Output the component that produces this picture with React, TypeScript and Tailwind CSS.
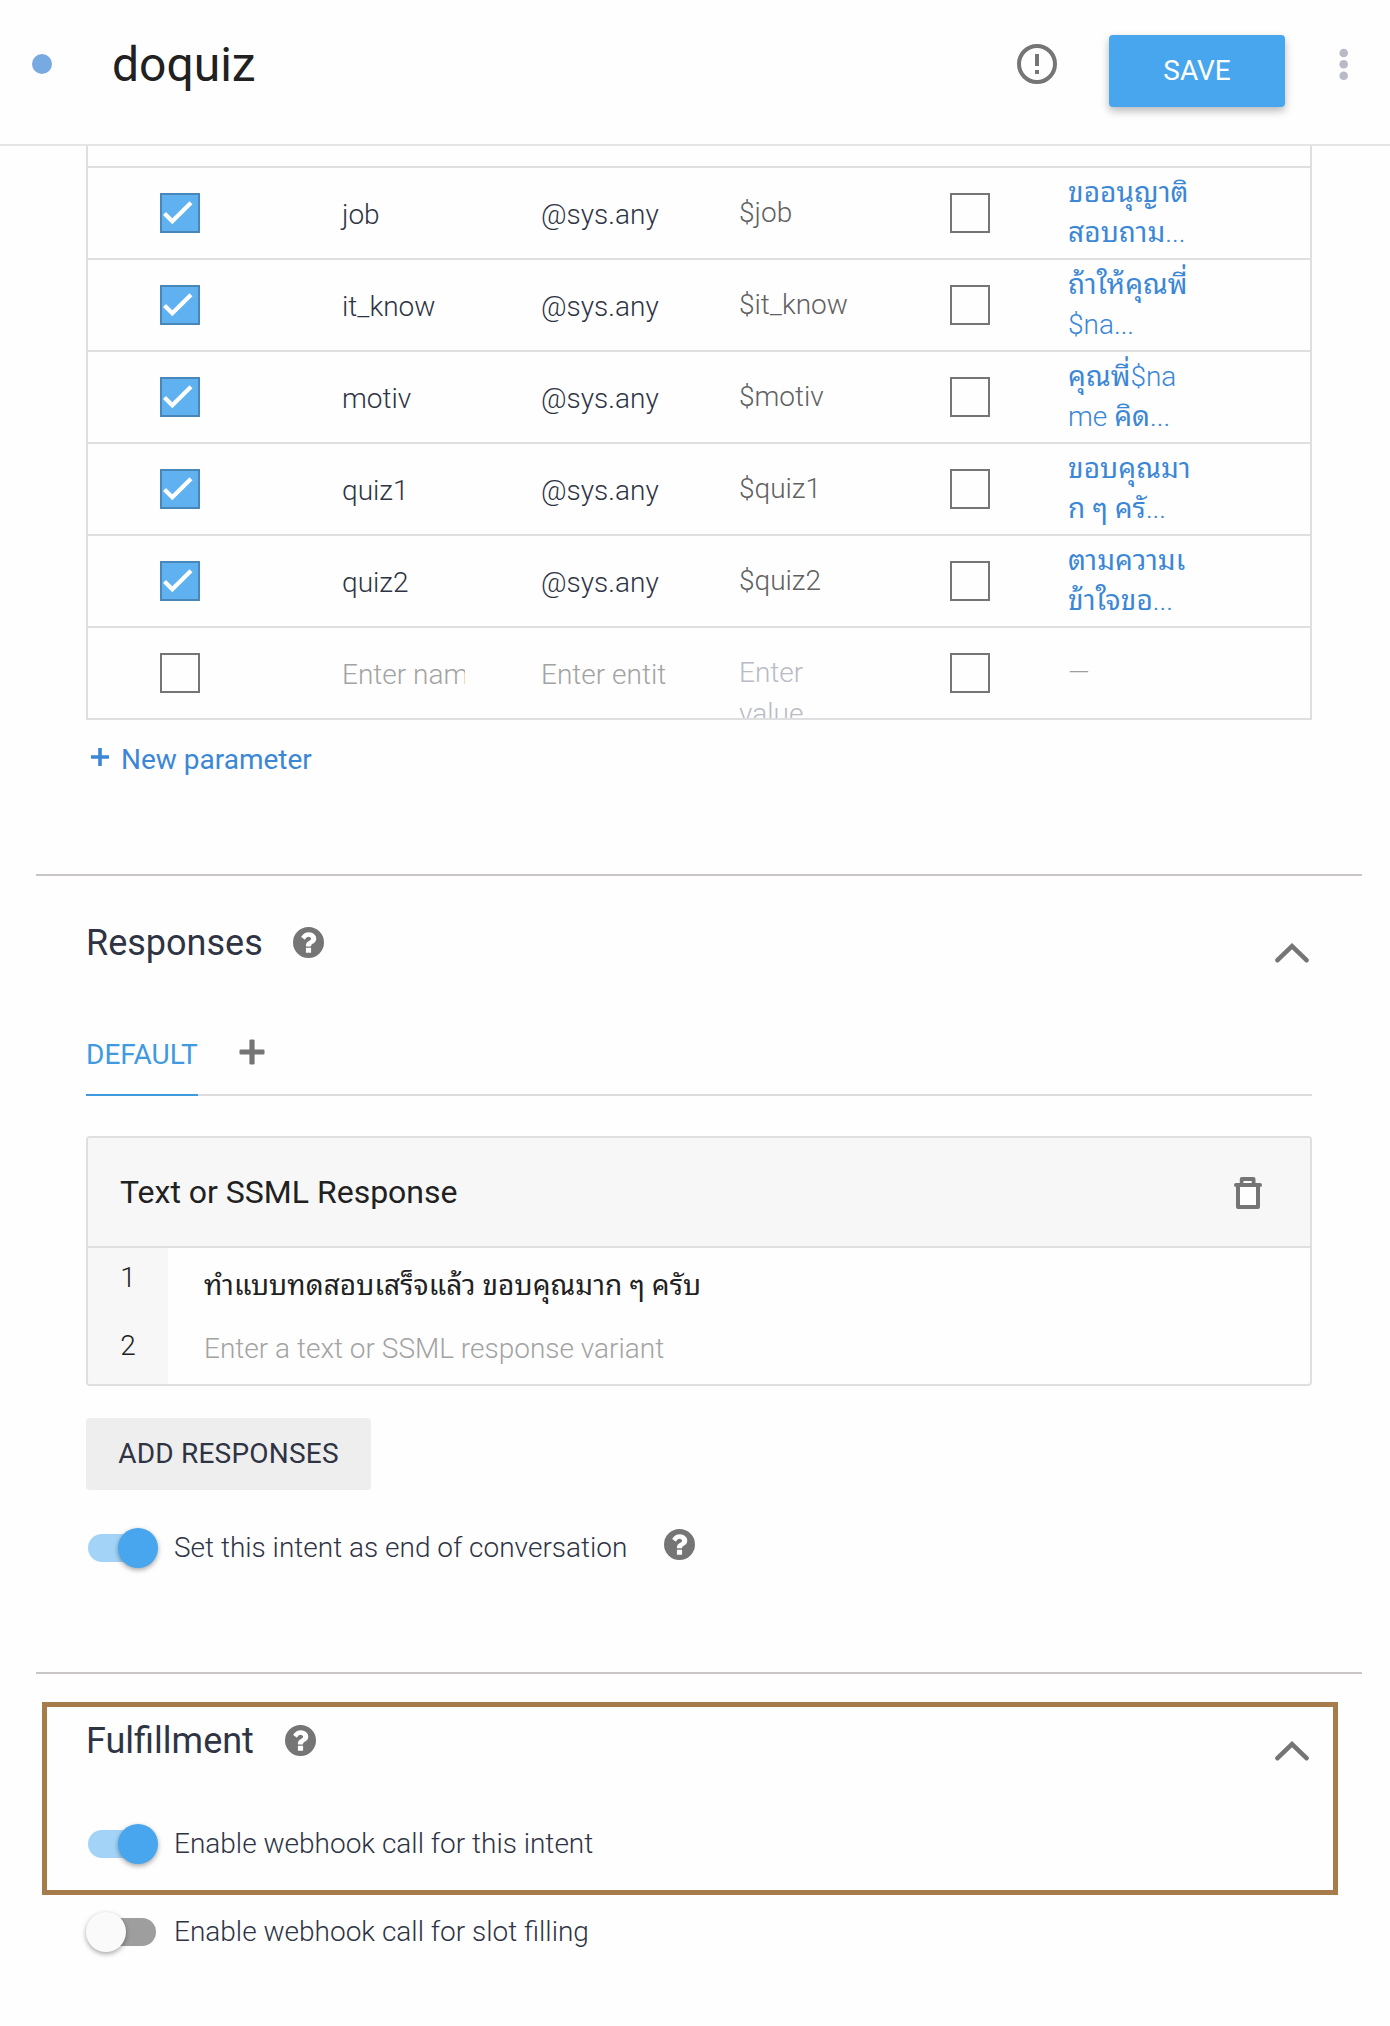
import React from "react";

type Param = { name: string; value: string; prompt: [string, string] };

const params: Param[] = [
  { name: "job", value: "$job", prompt: ["ขออนุญาติ", "สอบถาม..."] },
  { name: "it_know", value: "$it_know", prompt: ["ถ้าให้คุณพี่", "$na..."] },
  { name: "motiv", value: "$motiv", prompt: ["คุณพี่$na", "me คิด..."] },
  { name: "quiz1", value: "$quiz1", prompt: ["ขอบคุณมา", "ก ๆ ครั..."] },
  { name: "quiz2", value: "$quiz2", prompt: ["ตามความเ", "ข้าใจขอ..."] },
];

// Thai runs are set heavier than the light Latin text around them.
function Mixed({ text }: { text: string }) {
  return (
    <>
      {text.split(/([\u0e00-\u0e7f]+)/).map((part, i) =>
        i % 2 === 1 ? (
          <span key={i} className="font-['Noto_Sans_Thai_Looped','Loma','Waree','Garuda','Noto_Sans_Thai',sans-serif] leading-none font-normal tracking-[0.1px]">
            {part}
          </span>
        ) : (
          part
        ),
      )}
    </>
  );
}

function Checkbox({ checked = false }: { checked?: boolean }) {
  return checked ? (
    <span className="block size-10 border-2 border-[#4a87b9] bg-[#60b1ef]">
      <svg viewBox="0 0 36 36" className="block size-9">
        <path d="M2.500 18.500 L10.300 26.200 L29 7.700" fill="none" stroke="#fff" strokeWidth="4.200" />
      </svg>
    </span>
  ) : (
    <span className="block size-10 border-2 border-[#757575]" />
  );
}

function HelpIcon() {
  return (
    <svg viewBox="128 128 1536 1536" className="block size-[31px] shrink-0" fill="#757575">
      <path
        fillRule="evenodd"
        d="M1024 1376v-192q0-14-9-23t-23-9h-192q-14 0-23 9t-9 23v192q0 14 9 23t23 9h192q14 0 23-9t9-23zm256-672q0-88-55.500-163t-138.500-116-170-41q-243 0-371 213-15 24 8 42l132 100q7 6 19 6 16 0 25-12 53-68 86-92 34-24 86-24 48 0 85.500 26t37.500 59q0 38-20 61t-68 45q-63 28-115.500 86.500t-52.500 125.500v36q0 14 9 23t23 9h192q14 0 23-9t9-23q0-19 21.500-49.500t54.500-49.500q32-18 49-28.500t46-35 44.500-48 28-60.500 12.500-81zM1664 896a768 768 0 1 1-1536 0a768 768 0 1 1 1536 0z"
      />
    </svg>
  );
}

function Chevron() {
  return (
    <svg viewBox="0 0 34 20" className="block h-5 w-[34px]" fill="none" stroke="#757575" strokeWidth="4.6" strokeLinecap="round">
      <path d="M2.500 17.200 L17 3.200 L31.500 17.200" />
    </svg>
  );
}

function Toggle({ on = false }: { on?: boolean }) {
  return (
    <span className={on ? "flex h-10 w-[72px] items-center pl-0.5" : "flex h-10 w-[72px] items-center"}>
      {on ? (
        <>
          <span className="h-7 w-[50px] rounded-l-full bg-[#a3d4f7]" />
          <span className="-ml-5 size-10 shrink-0 rounded-full bg-[#48a6ee] shadow-[0_2px_5px_rgba(0,0,0,0.35)]" />
        </>
      ) : (
        <>
          <span className="z-10 size-10 shrink-0 rounded-full bg-[#fafafa] shadow-[0_2px_5px_rgba(0,0,0,0.35)]" />
          <span className="-ml-5 h-7 w-[50px] rounded-r-full bg-[#9e9e9e]" />
        </>
      )}
    </span>
  );
}

const cols = "grid h-[92px] grid-cols-[254px_199px_198px_211px_118px_1fr] overflow-hidden border-b-2 border-[#dfdfdf] font-light leading-10";

export default function App() {
  return (
    <div className="h-[2026px] w-[1390px] overflow-hidden bg-[#fefefe] font-['Roboto',sans-serif] text-[28px] text-[#2f3444]">
      <header className="flex h-[146px] border-b-2 border-[#e5e5e5]">
        <span className="mt-[54px] ml-8 size-5 rounded-full bg-[#78aae2]" />
        <h1 className="mt-[35px] ml-[60px] grow text-[48px] leading-[60px] text-[#212121]">doquiz</h1>
        <svg viewBox="0 0 40 40" className="mt-11 size-10" fill="none" stroke="#757575" strokeWidth="4">
          <circle cx="20" cy="20" r="18" />
          <path d="M20 10v12M20 26v4" />
        </svg>
        <button className="mt-[35px] ml-[52px] h-[72px] w-44 rounded bg-[#48a6ee] text-white shadow-[0_4px_8px_rgba(0,0,0,0.28)]">SAVE</button>
        <svg viewBox="0 0 10 32" className="mt-12 mr-[41px] ml-[54px] h-8 w-2.5" fill="#b8bbc5">
          <circle cx="4.700" cy="5" r="4.300" />
          <circle cx="4.700" cy="16.300" r="4.300" />
          <circle cx="4.700" cy="27.700" r="4.300" />
        </svg>
      </header>

      <section className="mx-auto h-[728px] pr-[78px] pl-[86px]">
        <div className="border-x-2 border-[#dfdfdf]">
          <div className="h-[22px] border-b-2 border-[#dfdfdf]" />
          {params.map((p) => (
            <div key={p.name} className={cols}>
              <div className="pt-[25px] pl-[72px]"><Checkbox checked /></div>
              <div className="pt-[27px]">{p.name}</div>
              <div className="pt-[27px]">@sys.any</div>
              <div className="pt-[25px] text-[#616161]">{p.value}</div>
              <div className="pt-[25px]"><Checkbox /></div>
              <div className="pt-[5px] whitespace-nowrap text-[#3b87d6]">
                <div className="h-10"><Mixed text={p.prompt[0]} /></div>
                <div className="h-10"><Mixed text={p.prompt[1]} /></div>
              </div>
            </div>
          ))}
          <div className={cols}>
            <div className="pt-[25px] pl-[72px]"><Checkbox /></div>
            <div className="w-[123px] overflow-hidden pt-[27px] whitespace-nowrap text-[#a3a3a3]">Enter name</div>
            <div className="w-[125px] overflow-hidden pt-[27px] whitespace-nowrap text-[#a3a3a3]">Enter entity</div>
            <div className="w-20 pt-6 leading-[41px] text-[#b8bbc5]">Enter value</div>
            <div className="pt-[25px]"><Checkbox /></div>
            <div className="pt-[25px] text-[#9e9e9e]">—</div>
          </div>
        </div>
        <div className="flex pt-5 leading-10 text-[#3b87d6]">
          <svg viewBox="0 0 18 18" className="mt-2 ml-[5px] size-[18px]" stroke="currentColor" strokeWidth="3.600">
            <path d="M9 0v18M0 9h18" />
          </svg>
          <span className="ml-3">New parameter</span>
        </div>
      </section>

      <section className="h-[798px]">
        <div className="ml-9 h-0.5 w-[1326px] bg-[#cac6c8]" />
        <div className="ml-[86px] w-[1226px]">
          <div className="flex h-[156px] pt-[42px]">
            <h2 className="text-[36px] leading-[50px]">Responses</h2>
            <span className="mt-[9px] ml-[30px]"><HelpIcon /></span>
            <span className="mt-[25px] mr-[3px] ml-auto"><Chevron /></span>
          </div>
          <div className="flex h-16 border-b-2 border-[#dcdcdc] leading-10">
            <div className="h-16 w-28 border-b-2 border-[#3f9ae0] text-[#3f9ae0]">
              <div className="pt-[3px]">DEFAULT</div>
            </div>
            <svg viewBox="0 0 26 26" className="mt-[7px] ml-[41px] size-[26px]" fill="#757575">
              <rect x="10.400" y="0.500" width="5.200" height="25" rx="1.300" />
              <rect x="0.500" y="10.400" width="25" height="5.200" rx="1.300" />
            </svg>
          </div>
          <div className="mt-10 h-[250px] overflow-hidden rounded-[4px] border-2 border-[#dfdfdf]">
            <div className="flex h-[110px] border-b-2 border-[#dfdfdf] bg-[#f7f7f7] text-[32px] text-[#212121]">
              <div className="grow pt-[33px] pl-8 leading-[42px]">Text or SSML Response</div>
              <svg viewBox="0 0 28 32" className="mt-[39px] mr-12 h-8 w-7" stroke="#757575" strokeWidth="4" strokeLinejoin="round">
                <path d="M4 8.500V30H24V8.500" fill="#fefefe" />
                <path d="M2 8H26" strokeLinecap="round" />
                <path d="M7.800 8V2H19.500V8" fill="none" />
                <path d="M9.500 4.200h8v1.800h-8z" fill="#fefefe" stroke="none" />
              </svg>
            </div>
            <div className="flex h-[136px] font-light leading-10 text-[#212121]">
              <div className="w-20 bg-[#f7f7f7] text-center">
                <div className="h-[68px] pt-2.5">1</div>
                <div className="pt-2.5">2</div>
              </div>
              <div className="pl-9">
                <div className="h-[63px] pt-[18px]"><Mixed text="ทำแบบทดสอบเสร็จแล้ว ขอบคุณมาก ๆ ครับ" /></div>
                <div className="pt-[18px] text-[#a3a3a3]">Enter a text or SSML response variant</div>
              </div>
            </div>
          </div>
          <button className="mt-8 block h-[72px] w-[285px] rounded bg-[#eeeeee] tracking-[0.2px]">ADD RESPONSES</button>
          <div className="mt-[38px] flex h-10 font-light leading-10">
            <Toggle on />
            <span className="ml-4">Set this intent as end of conversation</span>
            <span className="mt-px ml-[37px]"><HelpIcon /></span>
          </div>
        </div>
      </section>

      <section>
        <div className="ml-9 h-0.5 w-[1326px] bg-[#cac6c8]" />
        <div className="mt-7 ml-[42px] h-[193px] w-[1296px] border-[5px] border-[#a57c4a] pl-[39px]">
          <div className="flex h-[117px] pt-[9px]">
            <h2 className="text-[36px] leading-[50px]">Fulfillment</h2>
            <span className="mt-[9px] ml-[31px]"><HelpIcon /></span>
            <span className="mt-[25px] mr-6 ml-auto"><Chevron /></span>
          </div>
          <div className="flex h-10 font-light leading-10">
            <Toggle on />
            <span className="ml-4">Enable webhook call for this intent</span>
          </div>
        </div>
        <div className="mt-[17px] ml-[86px] flex h-10 font-light leading-10">
          <Toggle />
          <span className="ml-4">Enable webhook call for slot filling</span>
        </div>
      </section>
    </div>
  );
}
